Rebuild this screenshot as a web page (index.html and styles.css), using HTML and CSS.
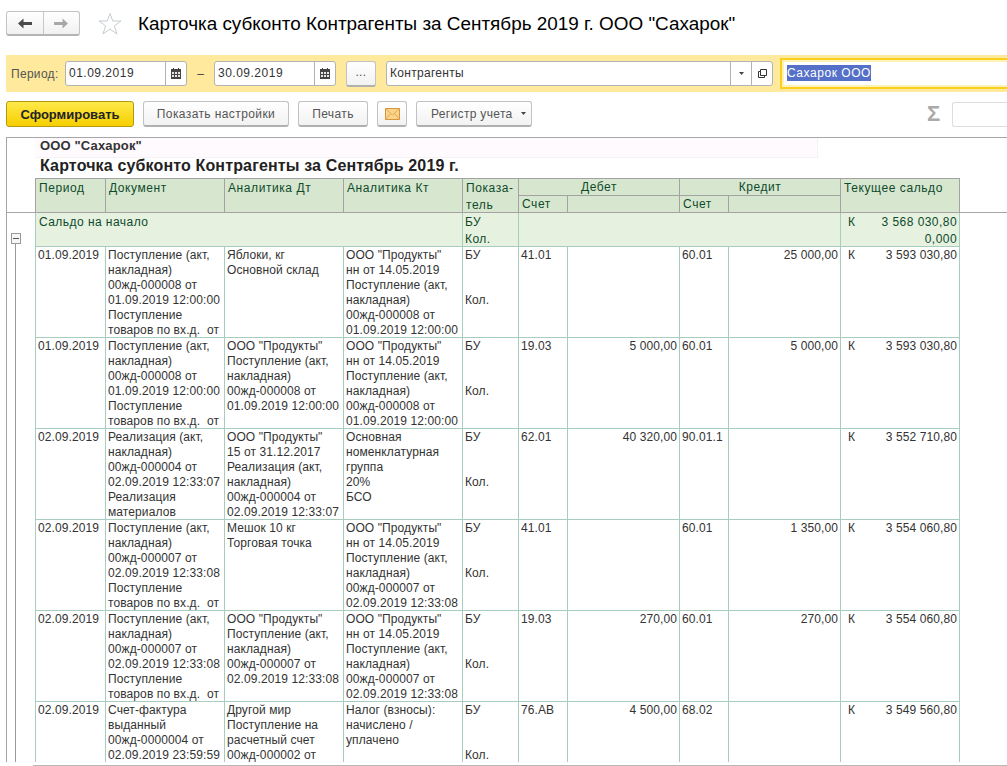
FILE: index.html
```html
<!DOCTYPE html>
<html lang="ru">
<head>
<meta charset="utf-8">
<title>Карточка субконто</title>
<link rel="stylesheet" href="styles.css">
</head>
<body>
<header class="titlebar">
  <div class="nav">
    <button class="nav-btn"><svg width="14" height="11" viewBox="0 0 14 11"><path d="M0 5.500 5.500 0.500V4H14V7H5.500V10.500Z" fill="#4a4a4a"/></svg></button>
    <button class="nav-btn"><svg width="14" height="11" viewBox="0 0 14 11"><path d="M14 5.500 8.500 0.500V4H0V7H8.500V10.500Z" fill="#a8a8a8"/></svg></button>
  </div>
  <svg class="star" width="24" height="24" viewBox="0 0 24 24"><path d="M12 1.500 14.800 9H23L16.400 13.800 19 22 12 17 5 22 7.600 13.800 1 9H9.200Z" fill="#fff" stroke="#c4ccd0" stroke-width="1"/></svg>
  <h1 class="title">Карточка субконто Контрагенты за Сентябрь 2019 г. ООО "Сахарок"</h1>
</header>

<section class="filter">
  <span class="filter-label">Период:</span>
  <div class="field date"><span class="field-text">01.09.2019</span><span class="field-btn cal"><svg width="10" height="11" viewBox="0 0 10 11"><path d="M0 1H2V0H3V1H7V0H8V1H10V11H0Z" fill="#444"/><path d="M1 4H3V6H1ZM4 4H6V6H4ZM7 4H9V6H7ZM1 7H3V9H1ZM4 7H6V9H4ZM7 7H9V9H7Z" fill="#e8e8e8"/></svg></span></div>
  <span class="dash">–</span>
  <div class="field date"><span class="field-text">30.09.2019</span><span class="field-btn cal"><svg width="10" height="11" viewBox="0 0 10 11"><path d="M0 1H2V0H3V1H7V0H8V1H10V11H0Z" fill="#444"/><path d="M1 4H3V6H1ZM4 4H6V6H4ZM7 4H9V6H7ZM1 7H3V9H1ZM4 7H6V9H4ZM7 7H9V9H7Z" fill="#e8e8e8"/></svg></span></div>
  <button class="btn dots">...</button>
  <div class="field kind"><span class="field-text">Контрагенты</span><span class="field-btn small"><svg width="5" height="3" viewBox="0 0 5 3"><path d="M0 0H5L2.500 3Z" fill="#444"/></svg></span><span class="field-btn small"><svg width="9" height="9" viewBox="0 0 9 9"><path d="M.5 2.500h6v6h-6z" fill="none" stroke="#333"/><path d="M2.500.5h6v6h-6z" fill="#fff" stroke="#333"/></svg></span></div>
  <div class="focus-field"><div class="focus-inner"><span class="selected">Сахарок ООО</span></div></div>
</section>

<section class="commands">
  <button class="btn primary">Сформировать</button>
  <button class="btn settings">Показать настройки</button>
  <button class="btn print">Печать</button>
  <button class="btn mail"><svg width="15" height="12" viewBox="0 0 15 12"><path d="M.5.5h14v11H.500z" fill="#fbd38a" stroke="#d8953a"/><path d="M.5.500 7.500 7 14.500.500M.5 11.500 5.500 5.500M14.500 11.500 9.500 5.500" fill="none" stroke="#e0a858"/></svg></button>
  <button class="btn register">Регистр учета<svg width="5" height="3" viewBox="0 0 5 3"><path d="M0 0H5L2.500 3Z" fill="#444"/></svg></button>
  <span class="sigma">Σ</span>
  <div class="sum-field"></div>
</section>

<section class="report">
  <aside class="gutter">
    <div class="gutter-head"></div>
    <div class="tree"><span class="tree-box"></span><span class="tree-line"></span></div>
  </aside>
  <div class="sheet">
    <div class="company">ООО "Сахарок"</div>
    <div class="report-title">Карточка субконто Контрагенты за Сентябрь 2019 г.</div>
    <table>
      <colgroup><col class="c1"><col class="c2"><col class="c3"><col class="c4"><col class="c5"><col class="c6"><col class="c7"><col class="c8"><col class="c9"><col class="c10"></colgroup>
      <thead>
        <tr class="head-top"><th rowspan="2">Период</th><th rowspan="2">Документ</th><th rowspan="2">Аналитика Дт</th><th rowspan="2">Аналитика Кт</th><th rowspan="2">Показа-<br>тель</th><th colspan="2" class="center">Дебет</th><th colspan="2" class="center">Кредит</th><th rowspan="2">Текущее сальдо</th></tr>
        <tr class="head-sub"><th>Счет</th><th></th><th>Счет</th><th></th></tr>
      </thead>
      <tbody>
        <tr class="saldo"><td colspan="4">Сальдо на начало</td><td>БУ<br>Кол.</td><td colspan="4"></td><td><div class="bal"><span>К</span><span>3 568 030,80</span></div><div class="num">0,000</div></td></tr>
        <tr><td>01.09.2019</td><td>Поступление (акт,<br>накладная)<br>00жд-000008 от<br>01.09.2019 12:00:00<br>Поступление<br>товаров по вх.д.&nbsp; от</td><td>Яблоки, кг<br>Основной склад</td><td>ООО "Продукты"<br>нн от 14.05.2019<br>Поступление (акт,<br>накладная)<br>00жд-000008 от<br>01.09.2019 12:00:00</td><td>БУ<br><br><br>Кол.</td><td>41.01</td><td class="num"></td><td>60.01</td><td class="num">25 000,00</td><td><div class="bal"><span>К</span><span>3 593 030,80</span></div></td></tr>
        <tr><td>01.09.2019</td><td>Поступление (акт,<br>накладная)<br>00жд-000008 от<br>01.09.2019 12:00:00<br>Поступление<br>товаров по вх.д.&nbsp; от</td><td>ООО "Продукты"<br>Поступление (акт,<br>накладная)<br>00жд-000008 от<br>01.09.2019 12:00:00</td><td>ООО "Продукты"<br>нн от 14.05.2019<br>Поступление (акт,<br>накладная)<br>00жд-000008 от<br>01.09.2019 12:00:00</td><td>БУ<br><br><br>Кол.</td><td>19.03</td><td class="num">5 000,00</td><td>60.01</td><td class="num">5 000,00</td><td><div class="bal"><span>К</span><span>3 593 030,80</span></div></td></tr>
        <tr><td>02.09.2019</td><td>Реализация (акт,<br>накладная)<br>00жд-000004 от<br>02.09.2019 12:33:07<br>Реализация<br>материалов</td><td>ООО "Продукты"<br>15 от 31.12.2017<br>Реализация (акт,<br>накладная)<br>00жд-000004 от<br>02.09.2019 12:33:07</td><td>Основная<br>номенклатурная<br>группа<br>20%<br>БСО</td><td>БУ<br><br><br>Кол.</td><td>62.01</td><td class="num">40 320,00</td><td>90.01.1</td><td class="num"></td><td><div class="bal"><span>К</span><span>3 552 710,80</span></div></td></tr>
        <tr><td>02.09.2019</td><td>Поступление (акт,<br>накладная)<br>00жд-000007 от<br>02.09.2019 12:33:08<br>Поступление<br>товаров по вх.д.&nbsp; от</td><td>Мешок 10 кг<br>Торговая точка</td><td>ООО "Продукты"<br>нн от 14.05.2019<br>Поступление (акт,<br>накладная)<br>00жд-000007 от<br>02.09.2019 12:33:08</td><td>БУ<br><br><br>Кол.</td><td>41.01</td><td class="num"></td><td>60.01</td><td class="num">1 350,00</td><td><div class="bal"><span>К</span><span>3 554 060,80</span></div></td></tr>
        <tr><td>02.09.2019</td><td>Поступление (акт,<br>накладная)<br>00жд-000007 от<br>02.09.2019 12:33:08<br>Поступление<br>товаров по вх.д.&nbsp; от</td><td>ООО "Продукты"<br>Поступление (акт,<br>накладная)<br>00жд-000007 от<br>02.09.2019 12:33:08</td><td>ООО "Продукты"<br>нн от 14.05.2019<br>Поступление (акт,<br>накладная)<br>00жд-000007 от<br>02.09.2019 12:33:08</td><td>БУ<br><br><br>Кол.</td><td>19.03</td><td class="num">270,00</td><td>60.01</td><td class="num">270,00</td><td><div class="bal"><span>К</span><span>3 554 060,80</span></div></td></tr>
        <tr class="last"><td>02.09.2019</td><td>Счет-фактура<br>выданный<br>00жд-0000004 от<br>02.09.2019 23:59:59</td><td>Другой мир<br>Поступление на<br>расчетный счет<br>00жд-000002 от</td><td>Налог (взносы):<br>начислено /<br>уплачено</td><td>БУ<br><br><br>Кол.</td><td>76.АВ</td><td class="num">4 500,00</td><td>68.02</td><td class="num"></td><td><div class="bal"><span>К</span><span>3 549 560,80</span></div></td></tr>
      </tbody>
    </table>
  </div>
  <div class="filler"><div class="filler-head"></div></div>
</section>
<div class="bottom-line"></div>
</body>
</html>
```
FILE: styles.css
```css
* { box-sizing: border-box; }
html, body { margin: 0; padding: 0; height: 766px; overflow: hidden; background: #fff; }
body { font-family: "Liberation Sans", Arial, sans-serif; font-size: 12px; color: #333; width: 1007px; }
button { font-family: inherit; margin: 0; padding: 0; cursor: default; }

.titlebar { display: flex; align-items: center; height: 55px; padding: 0 0 8px 6px; }
.nav { display: flex; flex: none; width: 74px; height: 25px; border: 1px solid #c4c4c4; border-bottom: 2px solid #b4b4b4; border-radius: 3px; background: linear-gradient(#fff, #f1f1f1); }
.nav-btn { flex: 1; display: flex; align-items: center; justify-content: center; border: 0; background: transparent; }
.nav-btn + .nav-btn { border-left: 1px solid #c8c8c8; }
.star { flex: none; margin-left: 18px; }
.title { margin: 0 0 0 16px; font-size: 18.9px; font-weight: 400; color: #000; white-space: nowrap; }

.filter { display: flex; align-items: center; height: 37px; margin-left: 6px; background: #fee99c; padding-left: 5px; }
.filter > * { flex: none; }
.filter-label { color: #555; width: 54px; letter-spacing: .3px; }
.field { display: flex; height: 25px; background: #fff; border: 1px solid #b2b2b2; border-radius: 3px; align-items: stretch; }
.field-text { flex: 1; padding-left: 3px; line-height: 23px; color: #333; letter-spacing: .3px; }
.field-btn { display: flex; flex: none; align-items: center; justify-content: center; border-left: 1px solid #b2b2b2; }
.date { width: 122px; }
.date .field-text { letter-spacing: .5px; }
.cal { width: 21px; }
.dash { width: 27px; text-align: center; color: #444; }
.dots { width: 30px; height: 26px; margin-left: 10px; color: #666; padding-bottom: 2px; }
.kind { width: 387px; margin-left: 10px; }
.small { width: 21px; }
.focus-field { width: 227px; height: 31px; margin-left: 7px; border: 2px solid #fccf1f; border-right: 0; background: #fdf2b8; padding: 2px 0 2px 2px; }
.focus-inner { height: 23px; background: #fff; padding: 3px 0 0 3px; }
.selected { display: block; width: 84px; height: 16px; line-height: 16px; background: #5470c8; color: #fff; letter-spacing: .55px; white-space: nowrap; }

.btn { height: 26px; border: 1px solid #c2c2c2; border-bottom: 2px solid #b0b0b0; border-radius: 3px; background: linear-gradient(#fff, #f2f2f2); color: #555; font-size: 12px; letter-spacing: .4px; }
.commands { display: flex; align-items: center; height: 26px; margin: 9px 0 10px 6px; }
.commands > * { flex: none; }
.primary { width: 128px; background: linear-gradient(#ffe94a, #f6cf00); border: 1px solid #b59a10; color: #222; font-weight: 700; font-size: 13px; letter-spacing: 0; }
.settings { width: 146px; margin-left: 9px; }
.print { width: 70px; margin-left: 9px; }
.mail { width: 30px; margin-left: 9px; display: flex; align-items: center; justify-content: center; }
.register { width: 116px; margin-left: 9px; padding-left: 14px; display: flex; align-items: center; gap: 8px; letter-spacing: .33px; }
.sigma { margin-left: 395px; width: 25px; font-size: 22px; font-weight: 700; color: #aaa; }
.sum-field { width: 55px; height: 25px; border: 1px solid #ddd; border-right: 0; border-radius: 3px 0 0 3px; }

.report { display: flex; height: 625px; margin-left: 6px; border-top: 1px solid #a6a6a6; }
.gutter { display: flex; flex: none; flex-direction: column; width: 29px; border-left: 1px solid #a6a6a6; }
.gutter-head { height: 75px; border-bottom: 1px solid #a6a6a6; }
.tree { flex: 1; display: flex; flex-direction: column; padding: 20px 0 0 4px; }
.tree-box { width: 10px; height: 11px; border: 1px solid #9a9a9a; background: linear-gradient(90deg, transparent 1px, #555 1px, #555 7px, transparent 7px) center / 100% 1px no-repeat #f6f6f6; }
.tree-line { flex: 1; width: 1px; margin-left: 4px; background: #9a9a9a; }

.sheet { flex: none; width: 925px; overflow: hidden; }
.company { width: 783px; height: 20px; padding-left: 5px; background: #fefafd; border-right: 1px solid #f5f3f4; border-bottom: 1px solid #f5f3f4; font-size: 13px; font-weight: 700; line-height: 16px; color: #333; letter-spacing: .15px; }
.report-title { height: 20px; padding-left: 5px; font-size: 16px; font-weight: 700; line-height: 16px; letter-spacing: .15px; color: #222; white-space: nowrap; }

table { width: 925px; border-collapse: separate; border-spacing: 0; table-layout: fixed; }
.c1 { width: 71px; } .c2 { width: 119px; } .c3 { width: 119px; } .c4 { width: 119px; } .c5 { width: 56px; }
.c6 { width: 49px; } .c7 { width: 112px; } .c8 { width: 49px; } .c9 { width: 112px; } .c10 { width: 119px; }
th { padding: 1px 3px 0; background: #d7e6cf; border-right: 1px solid #a3a3a3; border-bottom: 1px solid #a3a3a3; color: #0e4a2c; font-weight: 400; text-align: left; vertical-align: top; line-height: 17px; letter-spacing: .58px; white-space: nowrap; overflow: hidden; }
th::after { content: ""; display: block; margin-top: -3px; }
th:first-child { border-left: 1px solid #a3a3a3; }
.head-top th { height: 18px; border-top: 1px solid #a3a3a3; }
.head-sub th { height: 17px; line-height: 15px; }
.head-sub th:first-child { border-left: 0; }
th.center { text-align: center; line-height: 15px; }
td { height: 91px; padding: 1px 2px 0; border-right: 1px solid #a6cdbd; border-bottom: 1px solid #a6cdbd; vertical-align: top; line-height: 15px; letter-spacing: .1px; white-space: nowrap; overflow: hidden; }
td::after { content: ""; display: block; margin-top: -1px; }
td:first-child { border-left: 1px solid #a6cdbd; }
.num { text-align: right; }
.bal { display: flex; justify-content: space-between; padding-left: 5px; }
.saldo td { height: 34px; background: #e6f1df; color: #0e4a2c; line-height: 16.5px; letter-spacing: .45px; }
.saldo td:first-child { padding-left: 3px; }
.last td { height: 60px; border-bottom: 0; }
.filler { flex: 1; }
.filler-head { height: 75px; border-bottom: 1px solid #a6a6a6; }
.bottom-line { height: 1px; margin: 3px 0 0 33px; background: #b8b8b8; }
```
